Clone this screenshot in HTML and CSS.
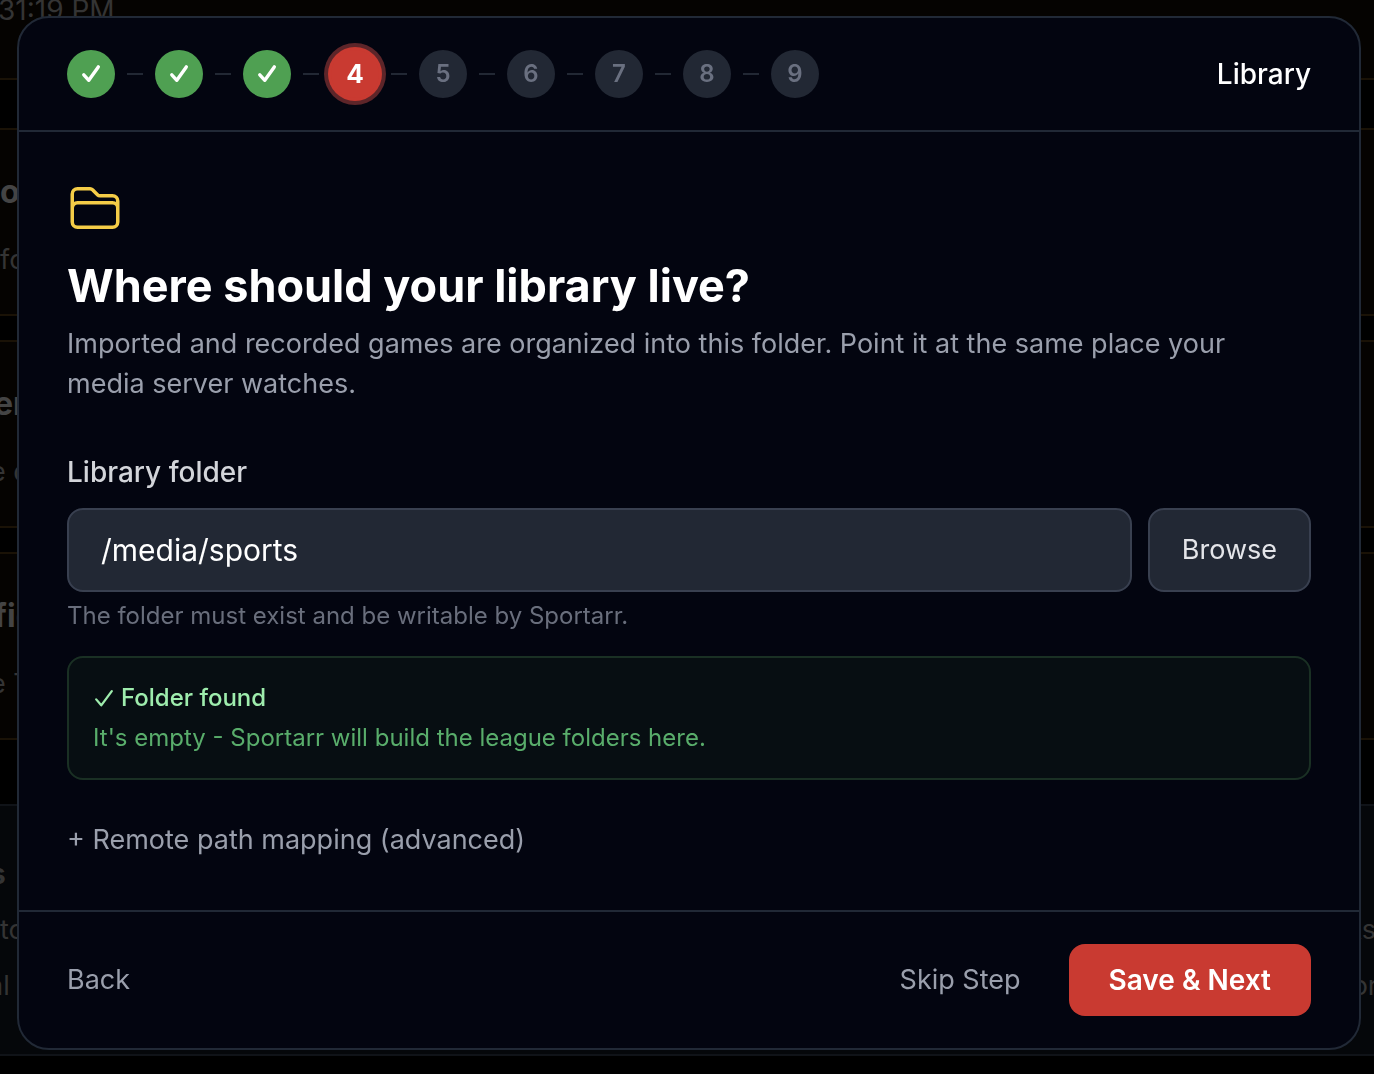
FILE: index.html
```html
<!DOCTYPE html>
<html lang="en">
<head>
  <meta charset="utf-8">
  <meta name="viewport" content="width=device-width, initial-scale=1.0">
  <title>Sportarr - Library setup</title>
  <link rel="stylesheet" href="styles.css">
</head>
<body>

<!-- page behind the dialog -->
<div class="page" aria-hidden="true">
  <div class="panel panel-top"><p>31:19 PM</p></div>
  <div class="panel-list">
    <div class="panel"><h3>o</h3><p>fo</p></div>
    <div class="panel panel-wide"><h3>er</h3><p>e d</p></div>
    <div class="panel panel-wide"><h3>fig</h3><p>e T</p></div>
  </div>
  <div class="panel panel-note">
    <h4>s</h4>
    <p><span>to</span><span>ks</span></p>
    <p class="last"><span>al</span><span>or</span></p>
  </div>
</div>

<div class="overlay">
  <main class="wizard" role="dialog" aria-labelledby="wizard-title">
    <header class="wizard-header">
      <ol class="steps">
        <li class="step done"><svg viewBox="0 0 24 24" role="img" aria-label="Done"><path d="M4.8 12.8 9.8 18.3 19.3 4.9"/></svg></li>
        <li class="step done"><svg viewBox="0 0 24 24" role="img" aria-label="Done"><path d="M4.8 12.8 9.8 18.3 19.3 4.9"/></svg></li>
        <li class="step done"><svg viewBox="0 0 24 24" role="img" aria-label="Done"><path d="M4.8 12.8 9.8 18.3 19.3 4.9"/></svg></li>
        <li class="step active" aria-current="step">4</li>
        <li class="step">5</li>
        <li class="step">6</li>
        <li class="step">7</li>
        <li class="step">8</li>
        <li class="step">9</li>
      </ol>
      <span class="step-name">Library</span>
    </header>

    <form class="wizard-body" id="library-form">
      <svg class="folder-icon" viewBox="0 0 24 24" aria-hidden="true">
        <path d="M2.25 12.75V12A2.25 2.25 0 0 1 4.5 9.75h15A2.25 2.25 0 0 1 21.75 12v.75m-8.69-6.44-2.12-2.12a1.5 1.5 0 0 0-1.061-.44H4.5A2.25 2.25 0 0 0 2.25 6v12a2.25 2.25 0 0 0 2.25 2.25h15A2.25 2.25 0 0 0 21.75 18V9a2.25 2.25 0 0 0-2.25-2.25h-5.379a1.5 1.5 0 0 1-1.06-.44Z"/>
      </svg>
      <h1 id="wizard-title">Where should your library live?</h1>
      <p class="intro">Imported and recorded games are organized into this folder. Point it at the same place your media server watches.</p>

      <label class="field-label" for="folder">Library folder</label>
      <div class="field-row">
        <input class="field-input" id="folder" type="text" value="/media/sports" aria-describedby="folder-hint">
        <button class="btn-browse" type="button">Browse</button>
      </div>
      <p class="hint" id="folder-hint">The folder must exist and be writable by Sportarr.</p>

      <div class="result" role="status">
        <p class="result-title"><svg viewBox="0 0 24 24" aria-hidden="true"><path d="M3.5 13.5 9 20 20.5 4.5"/></svg>Folder found</p>
        <p class="result-text">It's empty - Sportarr will build the league folders here.</p>
      </div>

      <button class="btn-text btn-advanced" type="button">+ Remote path mapping (advanced)</button>
    </form>

    <footer class="wizard-footer">
      <button class="btn-text" type="button">Back</button>
      <div class="actions">
        <button class="btn-text" type="button">Skip Step</button>
        <button class="btn-save" type="submit" form="library-form">Save &amp; Next</button>
      </div>
    </footer>
  </main>
</div>

</body>
</html>
```
FILE: styles.css
```css
* { box-sizing: border-box; }
body { margin: 0; background: #000; color: #fff; font-family: Inter, "Liberation Sans", sans-serif; font-size: 27px; line-height: 40px; overflow: hidden; }
h1, h3, h4, p, ol { margin: 0; padding: 0; }
button, input { margin: 0; font: inherit; }
button { cursor: pointer; }

/* dimmed page */
.page { height: 100vh; overflow: hidden; color: #343434; }
.panel { margin: 0 -2px; padding: 42px 0; height: 188px; background: #050301; border: 2px solid #1a1206; }
.panel h3 { margin-bottom: 28px; font-size: 32px; line-height: 40px; color: #444; }
.panel p { line-height: 40px; white-space: pre; }
.panel-wide h3 { margin-left: -6px; }
.panel-wide p { margin-left: -10px; }
.panel-top { height: 80px; padding: 0; border-top: 0; }
.panel-top p { margin-left: -2px; font-size: 28px; line-height: 20px; }
.panel-list { display: flex; flex-direction: column; gap: 24px; margin: 48px 0 64px; }
.panel-note { height: 252px; padding: 48px 0; background: #05070a; border-color: #101318; }
.panel-note h4 { margin: 0 0 8px -10px; font-size: 28px; line-height: 40px; }
.panel-note p { display: flex; justify-content: space-between; margin-right: -2px; line-height: 56px; }
.panel-note .last { margin: 0 -4px 0 -12px; }

.overlay { position: fixed; inset: 0; padding: 16px 13px 24px 17px; }
.wizard { background: #030510; border: 2px solid #212936; border-radius: 32px; }

.wizard-header { display: flex; align-items: center; justify-content: space-between; padding: 32px 48px; border-bottom: 2px solid #212936; }
.steps { display: flex; gap: 40px; list-style: none; }
.step { position: relative; display: flex; align-items: center; justify-content: center; width: 48px; height: 48px; border-radius: 50%; background: #222834; color: #6a7080; font-size: 24px; font-weight: 600; }
.step svg { width: 24px; height: 24px; fill: none; stroke: #fff; stroke-width: 3.4; stroke-linecap: round; stroke-linejoin: round; }
.step.done { background: #4fa052; }
.step.active { background: #c93a31; color: #fff; font-size: 26px; font-weight: 700; box-shadow: 0 0 0 3px #c93a31, 0 0 0 7px #5d2529; }
/* dash between two steps */
.step + .step::before { content: ""; position: absolute; left: -28px; top: 23px; width: 16px; height: 2px; background: #222834; }
.step-name { font-size: 28px; font-weight: 500; }

.wizard-body { padding: 48px 48px 50px; }
.folder-icon { display: block; width: 56px; height: 56px; margin-bottom: 18px; fill: none; stroke: #f5cd47; stroke-width: 1.5; stroke-linecap: round; stroke-linejoin: round; }
.wizard-body h1 { margin-bottom: 6px; font-size: 45px; line-height: 64px; font-weight: 700; }
.intro { padding-right: 48px; color: #9a9fac; }
.field-label { display: block; margin: 48px 0 16px; color: #d3d5da; font-size: 28px; font-weight: 500; }
.field-row { display: flex; gap: 16px; }
.field-input { flex: 1; min-width: 0; height: 84px; padding: 0 32px; background: #222834; border: 2px solid #394050; border-radius: 16px; color: #fff; font-size: 30px; }
.btn-browse { padding: 0 32px; background: #222834; border: 2px solid #394050; border-radius: 16px; color: #e4e5e9; }
.hint { margin-top: 8px; color: #696e7c; font-size: 24px; line-height: 32px; }

.result { margin: 24px 0 40px; padding: 24px; background: #070e12; border: 2px solid #1a3024; border-radius: 16px; font-size: 24px; line-height: 32px; }
.result-title { display: flex; align-items: center; gap: 6px; margin-bottom: 8px; color: #9eecad; font-weight: 500; }
.result-title svg { width: 22px; height: 22px; fill: none; stroke: currentColor; stroke-width: 2.5; stroke-linecap: round; stroke-linejoin: round; }
.result-text { color: #59ad6b; }

.btn-text { padding: 0; border: 0; background: none; color: #9a9fac; }
.btn-advanced { display: block; }

.wizard-footer { display: flex; align-items: center; justify-content: space-between; padding: 32px 48px; border-top: 2px solid #212936; }
.actions { display: flex; align-items: center; gap: 48px; }
.btn-save { height: 72px; padding: 0 40px; border: 0; border-radius: 16px; background: #c93a31; color: #fff; font-size: 28px; font-weight: 600; }
```
